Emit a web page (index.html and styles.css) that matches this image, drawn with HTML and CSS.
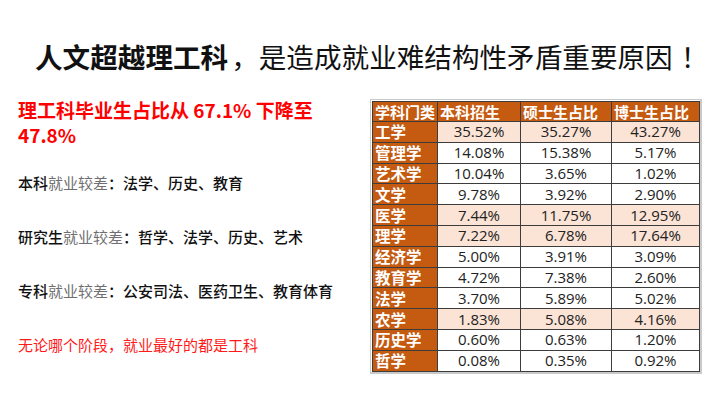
FILE: index.html
```html
<!DOCTYPE html>
<html lang="zh-CN">
<head>
<meta charset="utf-8">
<link rel="stylesheet" href="styles.css">
</head>
<body>
<div class="slide">
  <h1 class="title"><b>人文超越理工科</b><span class="p">，</span>是造成就业难结构性矛盾重要原因<span class="p pc">！</span></h1>
  <div class="content">
    <div class="left">
      <p class="headline">理工科毕业生占比从 67.1% 下降至 47.8%</p>
      <p class="item">本科<span class="dim">就业较差</span><span class="p">：</span>法学<span class="p">、</span>历史<span class="p">、</span>教育</p>
      <p class="item">研究生<span class="dim">就业较差</span><span class="p">：</span>哲学<span class="p">、</span>法学<span class="p">、</span>历史<span class="p">、</span>艺术</p>
      <p class="item">专科<span class="dim">就业较差</span><span class="p">：</span>公安司法<span class="p">、</span>医药卫生<span class="p">、</span>教育体育</p>
      <p class="item red">无论哪个阶段<span class="p">，</span>就业最好的都是工科</p>
    </div>
    <div class="tablewrap">
      <table class="data">
        <colgroup><col class="c1"><col class="c2"><col class="c3"><col class="c4"></colgroup>
        <thead>
          <tr><th>学科门类</th><th>本科招生</th><th>硕士生占比</th><th>博士生占比</th></tr>
        </thead>
        <tbody>
          <tr class="hl"><th>工学</th><td>35.52%</td><td>35.27%</td><td>43.27%</td></tr>
          <tr><th>管理学</th><td>14.08%</td><td>15.38%</td><td>5.17%</td></tr>
          <tr><th>艺术学</th><td>10.04%</td><td>3.65%</td><td>1.02%</td></tr>
          <tr><th>文学</th><td>9.78%</td><td>3.92%</td><td>2.90%</td></tr>
          <tr class="hl"><th>医学</th><td>7.44%</td><td>11.75%</td><td>12.95%</td></tr>
          <tr class="hl"><th>理学</th><td>7.22%</td><td>6.78%</td><td>17.64%</td></tr>
          <tr><th>经济学</th><td>5.00%</td><td>3.91%</td><td>3.09%</td></tr>
          <tr><th>教育学</th><td>4.72%</td><td>7.38%</td><td>2.60%</td></tr>
          <tr><th>法学</th><td>3.70%</td><td>5.89%</td><td>5.02%</td></tr>
          <tr class="hl"><th>农学</th><td>1.83%</td><td>5.08%</td><td>4.16%</td></tr>
          <tr><th>历史学</th><td>0.60%</td><td>0.63%</td><td>1.20%</td></tr>
          <tr><th>哲学</th><td>0.08%</td><td>0.35%</td><td>0.92%</td></tr>
        </tbody>
      </table>
    </div>
  </div>
</div>
</body>
</html>
```

FILE: styles.css
```css
* { box-sizing: border-box; }
html, body { margin: 0; padding: 0; background: #fff; }
body {
  width: 720px;
  height: 404px;
  overflow: hidden;
  font-family: "Noto Sans CJK SC", "Noto Sans", sans-serif;
  color: #111;
}
.p {
  display: inline-block;
  width: 1em;
  text-align: left;
}
.pc { text-align: center; }
.slide { padding-top: 38px; }
.title {
  margin: 0;
  padding-left: 35px;
  font-size: 27.6px;
  line-height: 36px;
  font-weight: 400;
  text-align: left;
  white-space: nowrap;
  color: #111;
}
.title b { font-weight: 700; }
.title .p { box-sizing: content-box; padding-left: 3px; }
.title .pc { padding-left: 8px; }
.content {
  display: flex;
  align-items: flex-start;
  margin-top: 23px;
  padding-left: 18px;
}
.left {
  width: 330px;
  display: flex;
  flex-direction: column;
  gap: 34px;
}
.left p { margin: 0; }
.headline {
  color: #ff0000;
  font-weight: 700;
  font-size: 19px;
  line-height: 25px;
  margin-bottom: -8px !important;
}
.item {
  font-size: 15px;
  line-height: 20px;
  font-weight: 500;
  color: #111;
  white-space: nowrap;
}
.dim { color: #6f6f6f; font-weight: 400; }
.red { color: #ff1a1a; font-weight: 400; }
.tablewrap {
  margin-left: 22px;
  margin-top: 2px;
  border: 1px solid #c9c9c9;
  border-right-width: 2px;
  border-bottom-width: 2px;
  padding: 1px 0 0 1px;
}
.data {
  border-collapse: collapse;
  table-layout: fixed;
  width: 327px;
  font-family: "Open Sans", "Noto Sans CJK SC", sans-serif;
}
.c1 { width: 65px; }
.c2 { width: 83px; }
.c3 { width: 91px; }
.c4 { width: 88px; }
.data th, .data td {
  border: 1px solid #3c3c3c;
  height: 20.8px;
  padding: 0;
  line-height: 19px;
  white-space: nowrap;
  overflow: hidden;
}
.data thead th {
  background: #c55a11;
  color: #fff;
  font-family: "Noto Sans CJK SC", sans-serif;
  font-weight: 700;
  font-size: 15px;
  text-align: left;
  padding-left: 2px;
  height: 20px;
}
.data tbody th {
  background: #c55a11;
  color: #fff;
  font-family: "Noto Sans CJK SC", sans-serif;
  font-weight: 700;
  font-size: 15.5px;
  text-align: left;
  padding-left: 2px;
}
.data td {
  text-align: center;
  font-size: 15px;
  color: #222;
  background: #fff;
}
.data tr.hl td { background: #fbe3d5; }
```
